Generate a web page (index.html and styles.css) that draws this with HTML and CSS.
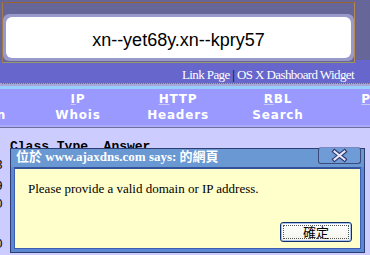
FILE: index.html
```html
<!DOCTYPE html>
<html>
<head>
<meta charset="utf-8">
<title>AjaxDNS</title>
<link rel="stylesheet" href="styles.css">
</head>
<body>
<div class="page">
  <header class="top">
    <div class="box">
      <div class="pill">
        <div class="field">xn--yet68y.xn--kpry57</div>
      </div>
    </div>
    <div class="links"><a class="lnk">Link Page</a> <span class="bar">|</span> <a class="lnk">OS X Dashboard Widget</a></div>
  </header>
  <div class="rule-a"></div>
  <div class="rule-b"></div>
  <nav class="nav">
    <div class="item">&nbsp;<br>Domain</div>
    <div class="item"><u>I</u>P<br>Whois</div>
    <div class="item"><u>H</u>TTP<br>Headers</div>
    <div class="item"><u>R</u>BL<br>Search</div>
    <div class="item"><u>P</u>ing<br>&nbsp;</div>
  </nav>
  <div class="rule-c"></div>
  <div class="rule-d"></div>
  <main class="content">
    <div class="hdr">Class Type  Answer</div>
    <div class="digits">
      <div class="d g3">8</div>
      <div class="d g5">9</div>
      <div class="d g2">0</div>
      <div class="d g24">0</div>
    </div>
  </main>
</div>

<div class="dialog">
  <div class="title">
    <span class="title-text">位於 www.ajaxdns.com says: 的網頁</span>
    <span class="close">
      <svg width="43" height="17" viewBox="0 0 43 17">
        <path d="M16.5 4.5 L26.5 12.5 M26.5 4.5 L16.5 12.5" stroke="#2f3a6a" stroke-width="4.2" stroke-linecap="square" fill="none"/>
        <path d="M16.5 4.5 L26.5 12.5 M26.5 4.5 L16.5 12.5" stroke="#e6e6ff" stroke-width="2" stroke-linecap="square" fill="none"/>
      </svg>
    </span>
  </div>
  <div class="dbody">
    <p class="msg">Please provide a valid domain or IP address.</p>
    <button class="ok" type="button">確定</button>
  </div>
</div>
</body>
</html>
```

FILE: styles.css
```css
html, body {
  margin: 0;
  padding: 0;
}
body {
  width: 370px;
  height: 255px;
  overflow: hidden;
  position: relative;
  background: #ccccff;
  font-family: "Liberation Serif", serif;
}

.top {
  height: 83px;
  padding: 2px 0 0 2px;
  box-sizing: border-box;
  height: 84px;
  background: linear-gradient(#666699 0, #666699 60px, #6666cc 60px);
  border-bottom: 1px dotted #c599bd;
  box-sizing: content-box;
  height: 81px;
}

.box {
  width: 351px;
  height: 59px;
  border: 1px solid #999966;
  border-top-color: #9c6230;
  border-right-color: #b48a52;
  border-left-color: #a0784a;
  background: #666699;
  padding-top: 11px;
  box-sizing: content-box;
  height: 48px;
}

.pill {
  height: 41px;
  padding: 3px;
  background: #9999cc;
  border-radius: 6px;
}

.field {
  height: 41px;
  box-sizing: border-box;
  padding-top: 5px;
  line-height: 36px;
  background: #ffffff;
  border-radius: 6px;
  text-align: center;
  font-family: "Liberation Sans", Arial, sans-serif;
  font-size: 18px;
  color: #000;
}

.links {
  width: 352px;
  padding-top: 4px;
  height: 16px;
  line-height: 16px;
  text-align: right;
  font-size: 13px;
  letter-spacing: -0.6px;
  color: #ffffff;
  white-space: nowrap;
}
.lnk {
  color: #ffffff;
}
.bar {
  color: #000000;
}

.rule-a {
  height: 2px;
  background: #a6a6d8;
}
.rule-b {
  height: 3px;
  background: #99ccff;
}

.nav {
  display: flex;
  height: 36px;
  box-sizing: border-box;
  padding-top: 2px;
  margin-left: -72px;
  background: #9999ff;
}
.item {
  flex: none;
  width: 100px;
  text-align: center;
  font-family: "DejaVu Sans", Verdana, sans-serif;
  font-weight: bold;
  font-size: 12px;
  line-height: 16px;
  letter-spacing: 0.8px;
  color: #ffffff;
  white-space: nowrap;
}
.item u {
  text-decoration-color: #c8c8f0;
}

.rule-c {
  height: 2px;
  background: #a9a9ff;
}
.rule-d {
  height: 1px;
  background: #6f6f99;
}

.content {
  padding-top: 11px;
}
.hdr {
  padding-left: 10px;
  font-family: "Liberation Mono", monospace;
  font-weight: bold;
  font-size: 13px;
  line-height: 16px;
  white-space: pre;
  color: #000;
}
.digits {
  margin-left: -5px;
  font-family: "Liberation Mono", monospace;
  font-size: 13px;
  line-height: 16px;
  color: #000;
}
.d { height: 16px; }
.g3 { margin-top: 3px; }
.g5 { margin-top: 5px; }
.g2 { margin-top: 2px; }
.g24 { margin-top: 24px; }

/* dialog */
.dialog {
  position: absolute;
  left: 10px;
  top: 148px;
  width: 355px;
  height: 105px;
  box-sizing: border-box;
  border: 1px solid #2d3f72;
  background: #5b88d4;
  display: flex;
  flex-direction: column;
}
.title {
  height: 18px;
  flex: none;
  display: flex;
  justify-content: space-between;
  align-items: flex-start;
  background: #6a98d2;
  padding-left: 5px;
}
.title-text {
  font-family: "Liberation Serif", "Noto Sans CJK TC", serif;
  font-weight: bold;
  font-size: 13px;
  line-height: 16px;
  color: #ffffff;
  white-space: nowrap;
}
.close {
  display: block;
  width: 43px;
  height: 17px;
  margin-top: -2px;
  margin-right: 3px;
  box-sizing: border-box;
  border: 1px solid #3b4a7c;
  border-top-color: #7f86c0;
  border-radius: 3px;
  background: #6f9cd6;
  position: relative;
}
.close svg {
  position: absolute;
  left: -1px;
  top: -1px;
}
.dbody {
  flex: 1;
  margin: 0 3px 3px 3px;
  border: 1px solid #3d5db0;
  border-top: 2px solid #34529e;
  background: #ffffcc;
  display: flex;
  flex-direction: column;
}
.msg {
  margin: 0;
  padding: 12px 0 0 13px;
  font-family: "Liberation Serif", serif;
  font-size: 13px;
  line-height: 15px;
  color: #000;
  white-space: nowrap;
}
.ok {
  margin: auto 8px 6px auto;
  width: 72px;
  height: 20px;
  padding: 0;
  box-sizing: border-box;
  border: 1px solid #12306c;
  border-radius: 3px;
  background: linear-gradient(#ffffff, #f2f2ec);
  box-shadow: inset 0 0 0 1px #a9c2ee;
  font-family: "Noto Sans CJK TC", sans-serif;
  font-size: 13px;
  line-height: 16px;
  color: #000;
  position: relative;
}
.ok::after {
  content: "";
  position: absolute;
  left: 2px;
  top: 2px;
  right: 2px;
  bottom: 2px;
  border: 1px dotted #555555;
}
```
